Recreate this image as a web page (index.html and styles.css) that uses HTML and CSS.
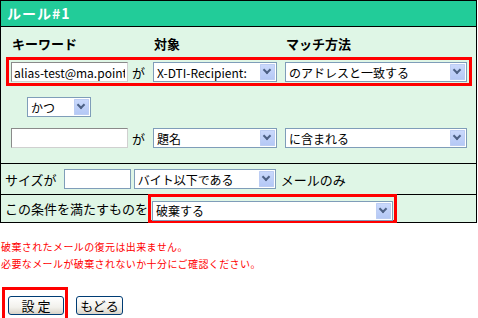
FILE: index.html
```html
<!DOCTYPE html>
<html lang="ja">
<head>
    <meta charset="UTF-8">
    <meta name="viewport" content="width=device-width, initial-scale=1.0">
    <title>ルール#1</title>
    <link rel="stylesheet" href="styles.css">
</head>
<body>

    <form class="rule-form">
        <div class="rule">
            <div class="rule-head">ルール#1</div>

            <div class="rule-cond">
                <div class="cols col-labels">
                    <span>キーワード</span>
                    <span>対象</span>
                    <span>マッチ方法</span>
                </div>

                <div class="cols cond-row mark mark-cond">
                    <span class="kw"><input type="text" class="kw-input" value="alias-test@ma.point.ne.jp"><span class="ga">が</span></span>
                    <span class="sel sel-target">
                        <select>
                            <option>X-DTI-Recipient:</option>
                            <option>題名</option>
                            <option>差出人</option>
                            <option>宛先</option>
                        </select>
                    </span>
                    <span class="sel sel-match">
                        <select>
                            <option>のアドレスと一致する</option>
                            <option>に含まれる</option>
                        </select>
                    </span>
                </div>

                <div class="join-row">
                    <span class="sel sel-join">
                        <select>
                            <option>かつ</option>
                            <option>または</option>
                        </select>
                    </span>
                </div>

                <div class="cols cond-row plain">
                    <span class="kw"><input type="text" class="kw-input" value=""><span class="ga">が</span></span>
                    <span class="sel sel-target">
                        <select>
                            <option>題名</option>
                            <option>X-DTI-Recipient:</option>
                            <option>差出人</option>
                        </select>
                    </span>
                    <span class="sel sel-match">
                        <select>
                            <option>に含まれる</option>
                            <option>のアドレスと一致する</option>
                        </select>
                    </span>
                </div>
            </div>

            <div class="rule-size">
                サイズが<input type="text" class="size-input" value="">
                <span class="sel sel-unit">
                    <select>
                        <option>バイト以下である</option>
                        <option>バイト以上である</option>
                    </select>
                </span>
                <span class="only">メールのみ</span>
            </div>

            <div class="rule-action">
                この条件を満たすものを<span class="mark mark-action"><span class="sel sel-action">
                    <select>
                        <option>破棄する</option>
                        <option>転送する</option>
                    </select>
                </span></span>
            </div>
        </div>

        <p class="notice">破棄されたメールの復元は出来ません。<br>必要なメールが破棄されないか十分にご確認ください。</p>

        <div class="buttons">
            <span class="mark mark-btn"><button type="button" class="btn btn-set">設 定</button></span>
            <button type="button" class="btn btn-back">もどる</button>
        </div>
    </form>

</body>
</html>
```

FILE: styles.css
```css
body {
    margin: 0;
    background-color: #ffffff;
    font-family: "Noto Sans CJK JP", sans-serif;
    font-size: 13px;
    color: #000000;
}
.rule-form {
    margin: 0;
}
.rule {
    width: 475px;
    border: 1px solid #000000;
    background-color: #dff6e6;
}
.rule-head {
    height: 25px;
    line-height: 25px;
    padding-left: 6px;
    background-color: #22cc99;
    color: #ffffff;
    font-size: 14px;
    font-weight: bold;
    letter-spacing: 1px;
    border-bottom: 1px solid #000000;
}

/* keyword conditions */
.rule-cond {
    padding-bottom: 15px;
}
.cols {
    display: grid;
    grid-template-columns: 142px 132px 182px;
    align-items: center;
}
.col-labels {
    height: 30px;
    padding-left: 11px;
    box-sizing: border-box;
    padding-top: 3px;
    font-weight: bold;
}
.mark {
    border: 3px solid #ff0000;
}
.mark-cond {
    width: 466px;
    box-sizing: border-box;
    margin-left: 5px;
    padding: 2px 0 1px 2px;
}
.plain {
    margin-top: 11px;
    padding-left: 10px;
}
.join-row {
    margin-top: 10px;
    padding-left: 26px;
}
.kw {
    display: flex;
    align-items: center;
}
.kw-input {
    width: 117px;
    height: 20px;
    box-sizing: border-box;
    padding: 0 2px;
    border: 1px solid;
    border-color: #8a8a8a #d0d0d0 #d0d0d0 #8a8a8a;
    font-family: inherit;
    font-size: 12px;
}
.ga {
    margin-left: 4px;
    font-size: 13px;
}

/* custom selects */
.sel {
    position: relative;
    display: inline-block;
    vertical-align: middle;
}
.sel select {
    display: block;
    width: 100%;
    height: 20px;
    box-sizing: border-box;
    padding: 0 18px 0 3px;
    border: 1px solid #7f9db9;
    background: #ffffff;
    font-family: inherit;
    font-size: 12px;
    color: #000000;
    appearance: none;
    -webkit-appearance: none;
}
.sel::before {
    content: "";
    position: absolute;
    top: 2px;
    right: 2px;
    bottom: 2px;
    width: 15px;
    background: linear-gradient(#cbdafc, #b3c7f5);
    box-shadow: inset 0 0 0 1px #bccdf3;
    border-radius: 1px;
    pointer-events: none;
}
.sel::after {
    content: "";
    position: absolute;
    top: 5px;
    right: 7px;
    width: 4px;
    height: 4px;
    border-right: 2px solid #4d6185;
    border-bottom: 2px solid #4d6185;
    transform: rotate(45deg);
    pointer-events: none;
}
.sel-target {
    width: 124px;
}
.sel-match {
    width: 182px;
}
.sel-join {
    width: 64px;
}
.sel-unit {
    width: 142px;
    margin-left: 3px;
}
.sel-action {
    width: 241px;
}

/* size row */
.rule-size {
    display: flex;
    align-items: center;
    height: 30px;
    padding-left: 4px;
    border-top: 1px solid #000000;
}
.size-input {
    width: 67px;
    height: 20px;
    box-sizing: border-box;
    margin-left: 7px;
    border: 1px solid #7f9db9;
    font-family: inherit;
    font-size: 12px;
}
.only {
    margin-left: 5px;
}

/* action row */
.rule-action {
    display: flex;
    align-items: flex-start;
    height: 27px;
    line-height: 27px;
    padding-left: 4px;
    border-top: 1px solid #000000;
}
.mark-action {
    position: relative;
    display: block;
    height: 29px;
    box-sizing: border-box;
    margin-top: -1px;
    padding: 2px 1px 1px 1px;
    line-height: normal;
}

.notice {
    margin: 15px 0 0;
    padding-left: 1px;
    color: #ff0000;
    font-size: 10px;
    line-height: 17px;
    letter-spacing: 0.4px;
}

.buttons {
    display: flex;
    align-items: flex-start;
    margin-top: 15px;
    padding-left: 2px;
}
.mark-btn {
    display: block;
    padding: 6px 1px 4px 3px;
}
.btn {
    display: block;
    height: 19px;
    padding: 0;
    border: 1px solid #003c74;
    border-radius: 3px;
    background: linear-gradient(#ffffff, #f2f1ec 60%, #d8d3c8);
    font-family: inherit;
    font-size: 13px;
    line-height: 17px;
    color: #000000;
    cursor: pointer;
}
.btn-set {
    width: 56px;
}
.btn-back {
    width: 47px;
    margin-top: 9px;
    margin-left: 8px;
}
```
